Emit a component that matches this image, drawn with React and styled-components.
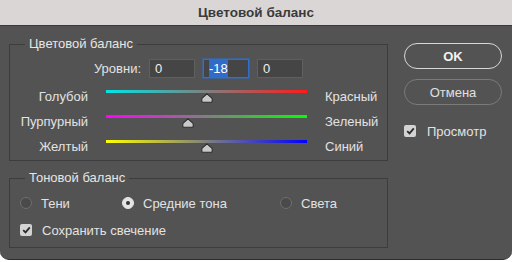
import styled, { createGlobalStyle } from 'styled-components';

const GlobalStyle = createGlobalStyle`
  html, body {
    margin: 0;
    padding: 0;
    background: #ffffff;
  }
  body {
    font-family: "Liberation Sans", Arial, sans-serif;
  }
`;

const SLIDERS = [
  { left: 'Голубой', right: 'Красный', from: '#00e5e5', to: '#ff1a1a', value: 0 },
  { left: 'Пурпурный', right: 'Зеленый', from: '#ff00ff', to: '#00ff00', value: -18 },
  { left: 'Желтый', right: 'Синий', from: '#ffff00', to: '#0000ff', value: 0 },
];

const TRACK_W = 201;

function Thumb() {
  return (
    <svg width="12" height="10" viewBox="0 0 12 10">
      <path
        d="M6 0.8 L10.8 5.2 Q11.2 5.6 11.2 6.2 L11.2 8.2 Q11.2 9.2 10.2 9.2 L1.8 9.2 Q0.8 9.2 0.8 8.2 L0.8 6.2 Q0.8 5.6 1.2 5.2 Z"
        fill="#c9c9c9"
        stroke="#2e2e2e"
        strokeWidth="1.1"
      />
    </svg>
  );
}

function Check() {
  return (
    <svg width="9" height="8" viewBox="0 0 9 8">
      <path d="M1.2 4.2 L3.5 6.4 L7.8 1.4" fill="none" stroke="#2b2b2b" strokeWidth="1.8" />
    </svg>
  );
}

function App() {
  return (
    <>
      <GlobalStyle />
      <Window>
        <TitleBar>Цветовой баланс</TitleBar>
        <Body>
          <MainColumn>
            <Group>
              <Legend>Цветовой баланс</Legend>
              <LevelsRow>
                <LevelsLabel>Уровни:</LevelsLabel>
                <LevelBox>0</LevelBox>
                <LevelBox $focused>
                  <Selection>-18</Selection>
                </LevelBox>
                <LevelBox>0</LevelBox>
              </LevelsRow>
              <Sliders>
                {SLIDERS.map((s) => (
                  <SliderRow key={s.left}>
                    <SideLabel $align="right">{s.left}</SideLabel>
                    <TrackCell>
                      <Track $from={s.from} $to={s.to} />
                      <ThumbSpot style={{ left: ((s.value + 100) / 200) * TRACK_W - 6 }}>
                        <Thumb />
                      </ThumbSpot>
                    </TrackCell>
                    <SideLabel $align="left">{s.right}</SideLabel>
                  </SliderRow>
                ))}
              </Sliders>
            </Group>

            <Group $gap>
              <Legend>Тоновой баланс</Legend>
              <RadioRow>
                <Option>
                  <Radio />
                  Тени
                </Option>
                <Option>
                  <Radio $on />
                  Средние тона
                </Option>
                <Option>
                  <Radio />
                  Света
                </Option>
              </RadioRow>
              <CheckRow>
                <CheckBox>
                  <Check />
                </CheckBox>
                Сохранить свечение
              </CheckRow>
            </Group>
          </MainColumn>

          <SideColumn>
            <PillButton $primary>OK</PillButton>
            <PillButton>Отмена</PillButton>
            <PreviewRow>
              <CheckBox>
                <Check />
              </CheckBox>
              Просмотр
            </PreviewRow>
          </SideColumn>
        </Body>
      </Window>
    </>
  );
}

export default App;

const Window = styled.div`
  width: 512px;
  height: 260px;
  background: #535353;
  border-radius: 0 0 9px 9px;
  overflow: hidden;
  display: flex;
  flex-direction: column;
  box-sizing: border-box;
  border-bottom: 1px solid #2c2c2c;
`;

const TitleBar = styled.div`
  height: 25px;
  flex: none;
  background: #dbd6d6;
  border-bottom: 1px solid #3a3a3a;
  color: #3a3a3a;
  font-weight: bold;
  font-size: 13.5px;
  line-height: 25px;
  text-align: center;
`;

const Body = styled.div`
  display: flex;
  gap: 16px;
  padding: 11px 0 0 9px;
  color: #e2e2e2;
  font-size: 13px;
`;

const MainColumn = styled.div`
  display: flex;
  flex-direction: column;
  width: 379px;
`;

const Group = styled.fieldset`
  margin: ${({ $gap }) => ($gap ? '10px 0 0' : '0')};
  padding: 0;
  border: 1px solid #3d3d3d;
  min-inline-size: 0;
`;

const Legend = styled.legend`
  margin-left: 15px;
  padding: 0 4px;
  line-height: 14px;
  font-size: 13px;
  color: #e6e6e6;
`;

const LevelsRow = styled.div`
  display: flex;
  align-items: center;
  gap: 8px;
  margin-top: 8px;
`;

const LevelsLabel = styled.span`
  width: 131px;
  text-align: right;
`;

const LevelBox = styled.div`
  width: 46px;
  height: 19px;
  box-sizing: border-box;
  background: #454545;
  border: 1px solid ${({ $focused }) => ($focused ? '#2d6fd2' : '#5f5f5f')};
  box-shadow: ${({ $focused }) => ($focused ? '0 0 0 0.5px #2d6fd2' : 'none')};
  padding-left: 5px;
  line-height: 17px;
  font-size: 13px;
  color: #efefef;
`;

const Selection = styled.span`
  background: #2f6cc9;
  color: #ffffff;
  padding: 1px 0;
`;

const Sliders = styled.div`
  display: flex;
  flex-direction: column;
  margin-top: 7px;
`;

const SliderRow = styled.div`
  display: grid;
  grid-template-columns: 78px ${TRACK_W}px auto;
  column-gap: 18px;
  height: 25px;
`;

const SideLabel = styled.span`
  text-align: ${({ $align }) => $align};
  line-height: 15px;
  margin-top: 4px;
`;

const TrackCell = styled.div`
  position: relative;
`;

const Track = styled.div`
  margin-top: 5px;
  height: 3px;
  background: linear-gradient(to right, ${({ $from }) => $from}, ${({ $to }) => $to});
`;

const ThumbSpot = styled.div`
  position: absolute;
  top: 8px;
  line-height: 0;
`;

const RadioRow = styled.div`
  display: grid;
  grid-template-columns: 102px 158px auto;
  margin: 9px 0 0 10px;
  height: 18px;
  align-items: center;
`;

const Option = styled.label`
  display: flex;
  align-items: center;
  gap: 9px;
`;

const Radio = styled.span`
  width: 12px;
  height: 12px;
  box-sizing: border-box;
  border-radius: 50%;
  background: ${({ $on }) => ($on ? '#e4e4e4' : '#4a4a4a')};
  border: 1px solid ${({ $on }) => ($on ? '#e4e4e4' : '#6e6e6e')};
  display: flex;
  align-items: center;
  justify-content: center;
  &::after {
    content: '';
    width: 4px;
    height: 4px;
    border-radius: 50%;
    background: ${({ $on }) => ($on ? '#333333' : 'transparent')};
  }
`;

const CheckRow = styled.label`
  display: flex;
  align-items: center;
  gap: 10px;
  margin: 9px 0 8px 10px;
  height: 18px;
`;

const CheckBox = styled.span`
  width: 12px;
  height: 12px;
  border-radius: 2px;
  background: #d3d3d3;
  display: flex;
  align-items: center;
  justify-content: center;
`;

const SideColumn = styled.div`
  display: flex;
  flex-direction: column;
  width: 98px;
  padding-top: 6px;
  gap: 10px;
`;

const PillButton = styled.button`
  height: 26px;
  box-sizing: border-box;
  border-radius: 13px;
  background: transparent;
  border: ${({ $primary }) => ($primary ? '1.5px solid #d8d8d8' : '1px solid #7a7a7a')};
  color: ${({ $primary }) => ($primary ? '#f2f2f2' : '#e0e0e0')};
  font-family: "Liberation Sans", Arial, sans-serif;
  font-size: 13px;
  font-weight: ${({ $primary }) => ($primary ? 'bold' : 'normal')};
  padding: 0;
`;

const PreviewRow = styled.label`
  display: flex;
  align-items: center;
  gap: 11px;
  margin-top: 9px;
  height: 14px;
  font-size: 13px;
`;
